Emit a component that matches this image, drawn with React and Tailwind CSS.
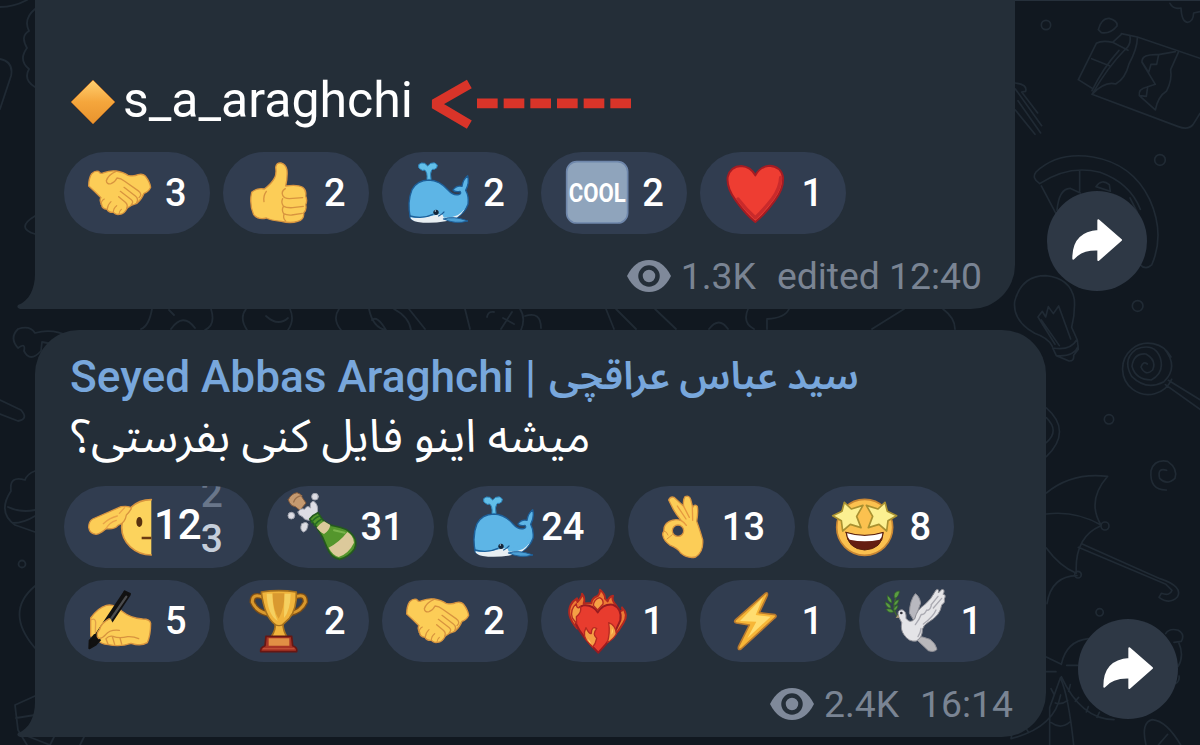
import React from "react";
import clsx from "clsx";

const SKIN = "#fccd57";
const SKIN_LINE = "#d8943f";

// Every emoji is drawn in its own viewBox and fills a 72px box
const Emoji = ({ box, children }) => (
  <svg
    viewBox={box}
    className="ml-5 h-[72px] w-[72px] shrink-0 overflow-visible"
    fill="none"
    strokeLinecap="round"
    strokeLinejoin="round"
  >
    {children}
  </svg>
);

const Handshake = () => (
  <Emoji box="252 321 216 216">
    <g stroke={SKIN_LINE} strokeWidth="4">
      <path fill={SKIN} d="M266 408 Q266 385 275 371 Q285 361 296 364 Q301 374 312 368 Q330 361 348 363 Q370 366 384 376 Q402 380 414 374 Q428 370 436 378 Q450 396 452 412 Q446 426 432 430 Q426 447 411 460 Q394 464 382 474 Q372 494 358 493 Q347 495 340 487 Q326 488 321 478 Q305 477 305 463 Q297 450 303 443 Q284 424 266 408Z" />
      <path d="M348 364 Q325 374 319 392 Q320 404 333 401 Q345 397 351 384 Q363 385 373 393 L414 422 Q429 433 417 443 M372 412 L406 438 Q417 447 410 458 M361 424 L394 449 Q402 456 394 464 M356 440 L376 457 Q385 465 380 475" />
      <path d="M303 463 Q305 450 313 447 M322 477 Q323 464 333 455 M340 487 Q340 474 350 467 M357 493 Q357 484 364 478" strokeWidth="3.5" />
    </g>
  </Emoji>
);

const ThumbsUp = () => (
  <Emoji box="729 321 216 216">
    <g stroke={SKIN_LINE} strokeWidth="4">
      <path fill={SKIN} d="M827 352 Q829 337 843 339 Q857 342 861 360 Q863 382 857 408 Q893 403 908 412 Q920 421 917 438 Q923 452 917 464 Q921 480 911 489 Q913 509 893 514 Q872 521 844 514 Q810 511 799 504 Q774 510 761 494 Q747 462 755 427 Q770 413 793 417 Q815 401 824 383 Q830 370 827 352Z" />
      <path d="M799 424 Q789 438 792 455 M856 416 Q843 424 848 436 Q852 446 868 446 L908 443 M848 446 Q842 457 850 468 Q858 474 878 473 L910 469 M850 470 Q844 480 851 491 Q860 496 875 495 L907 490 M852 493 Q848 505 857 513" />
    </g>
  </Emoji>
);

const Whale = () => (
  <Emoji box="96 291 216 216">
    <path fill="#5db5e6" stroke="#1d5f99" strokeWidth="4" d="M121 474 Q111 425 126 389 Q141 361 176 360 Q209 361 234 390 Q251 409 268 403 Q275 400 270 394 Q254 397 249 390 Q259 375 276 379 Q279 358 293 347 Q299 369 287 391 Q297 408 294 433 Q285 459 258 474 Q205 487 148 483 Q126 482 121 474Z" />
    <path fill="#e8eef2" d="M121 472 Q150 477 183 468 L215 461 L224 473 L284 448 Q264 482 226 484 Q180 492 143 486 Q122 482 121 472Z" />
    <path fill="#5db5e6" d="M220 460 Q266 463 289 424 Q291 448 264 465 Q242 475 220 472Z" />
    <path stroke="#1d5f99" strokeWidth="4" d="M120 468 Q159 478 189 463 M206 468 Q218 462 222 456" />
    <path fill="#4ca0d5" stroke="#1d5f99" strokeWidth="3" d="M221 477 Q248 466 294 483 Q255 494 221 477Z" />
    <circle cx="198" cy="457" r="8" fill="#142539" />
    <circle cx="196" cy="453" r="2" fill="#d6edfa" />
    <path fill="#62bfe8" stroke="#2d85bd" strokeWidth="3" d="M171 357 Q173 337 164 330 Q156 333 152 328 Q144 326 146 314 Q153 306 164 310 L173 318 L182 310 Q195 305 202 315 Q202 326 193 328 Q187 327 185 330 Q179 340 183 357Z" />
  </Emoji>
);

const Cool = () => (
  <Emoji box="573 291 216 216">
    <rect x="590" y="305" width="183" height="184" rx="30" fill="#8fa4bc" stroke="#6f87ab" strokeWidth="5" />
    <text
      x="596"
      y="425"
      textLength="171"
      lengthAdjust="spacingAndGlyphs"
      fill="#fff"
      className="font-[Roboto,sans-serif] text-[76px] font-bold"
    >
      COOL
    </text>
  </Emoji>
);

const Heart = () => (
  <Emoji box="1053 291 216 216">
    <path fill="#ee3d32" stroke="#a41c23" strokeWidth="6" d="M1159 486 Q1130 463 1100 421 Q1072 383 1076 351 Q1084 319 1117 318 Q1145 320 1159 346 Q1173 320 1201 317 Q1236 319 1242 351 Q1245 385 1218 421 Q1187 464 1159 486Z" />
    <path stroke="#c92a2b" strokeWidth="10" d="M1235 352 Q1234 384 1210 416 Q1180 454 1159 473 Q1132 450 1107 417" />
  </Emoji>
);

const Salute = () => (
  <Emoji box="102 48 216 216">
    <path fill="#fcd35d" d="M304 74 A89 83 0 0 0 304 240Z" />
    <path stroke={SKIN_LINE} strokeWidth="5" d="M304 74 A89 83 0 0 0 304 240" />
    <path fill={SKIN} stroke={SKIN_LINE} strokeWidth="4" d="M128 132 Q169 114 213 95 Q240 91 244 101 Q237 113 229 120 Q226 144 204 151 Q194 164 168 161 Q151 176 138 178 Q119 176 116 157 Q116 139 128 132Z" />
    <path stroke="#e9a348" strokeWidth="4" d="M160 146 Q178 129 202 123 M168 161 Q178 142 199 136 M224 98 L208 115" />
    <ellipse cx="268" cy="141" rx="9" ry="15" fill="#57300f" />
    <path stroke="#6b3a12" strokeWidth="8" strokeLinecap="butt" d="M275 189 H304" />
  </Emoji>
);

const Champagne = () => (
  <Emoji box="708 48 216 216">
    <path fill="#c59a70" stroke="#80593c" strokeWidth="3" d="M712 74 Q720 56 738 53 Q752 56 754 68 L765 84 L747 106 L733 95 Q716 92 712 74Z" />
    <path stroke="#9b714d" strokeWidth="4" d="M728 81 Q733 65 752 62" />
    <g fill="#dddde4" stroke="#a2a5b0" strokeWidth="3">
      <path d="M741 111 Q749 98 761 103 Q768 89 779 99 Q775 80 788 79 Q803 88 799 112 L775 136 Q758 134 755 125 Q742 122 741 111Z" />
      <circle cx="792" cy="65" r="10" />
      <circle cx="721" cy="122" r="10" />
      <path d="M752 147 Q766 137 771 148 Q769 169 757 171 Q745 164 752 147Z" />
    </g>
    <path fill="#54962c" stroke="#245a1e" strokeWidth="5" d="M776 132 Q786 119 801 113 L814 133 Q828 150 850 153 Q892 160 905 180 Q921 199 910 223 Q893 247 866 253 Q841 249 829 220 Q817 186 797 157Z" />
    <path fill="#dcc99b" d="M797 158 Q808 145 819 139 L838 150 Q835 167 819 177 Q807 171 797 158Z M833 218 Q865 202 889 171 Q908 182 909 203 Q894 235 863 246 Q844 240 833 218Z" />
    <path stroke="#276c24" strokeWidth="5" d="M782 142 Q791 128 806 123 M790 151 Q800 138 812 132" />
    <path stroke="#79b44b" strokeWidth="6" d="M849 166 L881 173" />
  </Emoji>
);

const OkHand = () => (
  <Emoji box="624 48 216 216">
    <path fill={SKIN} stroke={SKIN_LINE} strokeWidth="4" d="M686 75 Q690 63 702 67 L731 94 Q728 74 735 65 Q748 60 752 73 L758 97 Q765 85 772 94 Q775 112 770 139 Q777 157 788 194 Q791 231 767 246 Q744 252 722 234 Q713 219 691 211 Q671 197 669 183 Q666 174 672 168 Q670 148 688 139 Q706 130 724 137 Q709 119 700 103Z" />
    <path stroke="#e6993f" strokeWidth="4" d="M724 137 Q735 144 739 151 M731 94 L748 127 M757 96 L758 136 M712 93 Q728 117 738 132" />
    <circle cx="714" cy="167" r="17" fill="#313d50" stroke={SKIN_LINE} strokeWidth="4" />
    <path stroke={SKIN_LINE} strokeWidth="3" d="M672 168 Q681 169 684 180 M681 192 L697 179" />
  </Emoji>
);

const StarStruck = () => (
  <Emoji box="414 48 216 216">
    <circle cx="524" cy="157" r="84" fill="#fbc14f" stroke="#c88633" strokeWidth="5" />
    <g fill="#fcf091" stroke="#a99131" strokeWidth="5">
      <path d="M463 82 L484 102 L519 91 L500 124 L513 158 L481 148 L458 168 L454 137 L428 122 L456 109Z" />
      <path d="M585 82 L564 102 L529 91 L548 124 L535 158 L567 148 L590 168 L594 137 L620 122 L592 109Z" />
    </g>
    <path fill="#641d12" stroke="#57210f" strokeWidth="3" d="M468 172 Q524 190 580 172 Q577 222 524 225 Q473 222 468 172Z" />
    <path fill="#fff" d="M471 175 Q524 191 577 175 Q577 187 569 194 Q524 203 479 194 Q472 188 471 175Z" />
  </Emoji>
);

const Writing = () => (
  <Emoji box="102 330 216 216">
    <path fill={SKIN} stroke={SKIN_LINE} strokeWidth="4" d="M122 429 Q144 398 169 391 Q194 386 215 408 Q242 430 278 432 Q300 432 302 445 Q302 481 292 503 Q272 515 243 505 Q211 516 175 509 Q150 507 142 492 Q126 497 122 482Z" />
    <path stroke="#111" strokeWidth="24" strokeLinecap="butt" d="M232 354 L144 486" />
    <path stroke="#4b4c4e" strokeWidth="7" d="M229 365 L158 468" />
    <path fill="#111" stroke="#111" strokeWidth="6" d="M224 349 L240 357 M134 480 L119 497 L118 520 L136 510 L155 489Z" />
    <path fill={SKIN} d="M157 443 L181 431 L198 459 L186 481 L155 496 Q139 488 141 474Z" />
    <path stroke={SKIN_LINE} strokeWidth="4" d="M178 431 Q154 444 149 463 Q135 479 146 491 Q160 489 167 479 Q179 463 208 466 M168 491 Q177 481 189 484 Q207 491 233 485 Q251 484 266 491 M168 492 L174 507 M187 485 L194 508 M210 489 L215 507" />
    <path stroke="#e0a04a" strokeWidth="4" d="M124 434 Q136 429 137 442 L136 472" />
  </Emoji>
);

const Trophy = () => (
  <Emoji box="579 330 216 216">
    <path stroke="#7c4d16" strokeWidth="17" d="M640 367 Q607 353 607 381 Q619 409 651 416 M733 367 Q766 353 766 381 Q754 409 720 416" />
    <path stroke="#d9982c" strokeWidth="9" d="M640 367 Q607 353 607 381 Q619 409 651 416 M733 367 Q766 353 766 381 Q754 409 720 416" />
    <path fill="#f0b43c" stroke="#a5701d" strokeWidth="5" d="M634 351 Q686 343 739 351 Q741 402 718 430 L699 448 Q699 466 711 486 H663 Q678 464 675 448 Q643 425 634 351Z" />
    <path fill="#f5d060" d="M650 356 H667 Q668 405 683 438 Q652 418 650 356Z M703 356 H722 Q721 406 702 429Z" />
    <path fill="#d99930" d="M668 355 H703 Q704 401 686 431 Q668 405 668 355Z" />
    <path stroke="#a5701d" strokeWidth="4" d="M675 449 Q687 455 699 449" />
    <path fill="#a83425" stroke="#671713" strokeWidth="5" d="M648 484 H725 L728 512 Q743 517 740 530 H632 Q630 518 645 512Z" />
    <path fill="#e18f45" d="M656 490 H718 V512 H656Z" />
    <path stroke="#c04e35" strokeWidth="4" d="M640 521 H732" />
  </Emoji>
);

const FireHeart = () => (
  <Emoji box="363 330 216 216">
    <path fill="#ee7a34" stroke="#b3281f" strokeWidth="6" d="M411 460 Q377 422 392 390 Q399 377 411 370 L412 381 Q427 365 426 356 Q437 370 431 385 L454 385 Q455 369 473 363 Q481 355 480 344 Q496 357 495 371 L503 379 Q506 365 519 362 Q514 376 526 388 L539 408 Q550 410 546 397 Q567 418 550 444 Q537 467 520 485Z" />
    <path fill="#e83c2e" stroke="#981b20" strokeWidth="6" d="M475 533 Q425 485 408 447 Q400 401 430 391 Q459 388 473 412 Q490 386 518 389 Q547 401 541 436 Q523 483 475 533Z" />
    <g fill="#f5a045" stroke="#b62a22" strokeWidth="4">
      <path d="M449 507 Q424 484 438 458 Q448 479 454 475 Q455 451 470 461 Q456 477 470 490 Q467 506 458 516Z" />
      <path d="M502 503 Q511 474 506 443 Q528 451 529 477 Q520 493 502 503Z" />
      <path d="M397 429 Q389 403 409 386 Q410 405 421 395 Q427 410 409 425 L410 446Z" />
      <path d="M460 391 Q462 373 479 368 Q491 373 489 387 L473 405Z" />
    </g>
    <path fill="#ffd467" d="M443 491 Q452 498 454 507 Q445 501 443 491Z M514 479 L516 460 Q523 471 514 479Z" />
  </Emoji>
);

const Bolt = () => (
  <Emoji box="93 330 216 216">
    <path fill="#f7b637" stroke="#b8792e" strokeWidth="5" d="M229 355 Q237 350 235 361 L211 413 L258 419 Q265 423 257 429 L156 522 Q145 527 149 514 L181 450 L142 444 Q133 441 140 434Z" />
    <path fill="#ffdd70" d="M222 367 L200 420 L245 425 L175 490 L202 440 L153 438Z" />
  </Emoji>
);

const Dove = () => (
  <Emoji box="567 330 216 216">
    <path stroke="#3f682f" strokeWidth="4" d="M622 424 Q602 399 624 352" />
    <path fill="#5b9d42" stroke="#315f2b" strokeWidth="2" d="M622 349 Q610 353 613 369 Q624 371 629 349Z M592 361 Q590 380 605 384 Q608 373 592 361Z M586 381 Q587 398 603 400 Q603 387 586 381Z M588 403 Q596 416 611 411 Q605 398 588 403Z M627 374 Q613 376 611 390 Q622 393 627 374Z M624 391 Q611 395 611 406 Q622 407 624 391Z" />
    <g stroke="#8f8f96" strokeWidth="3">
      <path fill="#b8b8bf" d="M658 413 Q660 374 676 356 Q688 363 692 384 L673 438Z" />
      <path fill="#b9b8bb" d="M678 484 Q699 484 720 493 Q737 505 741 523 Q733 533 715 527 L680 494Z" />
      <path fill="#e4e4e7" d="M626 425 Q619 405 636 404 Q650 408 648 430 Q660 447 674 432 Q681 403 703 390 Q723 374 738 345 Q748 339 745 354 L756 343 Q767 344 759 358 Q770 359 763 372 Q768 381 755 390 Q751 421 716 441 Q701 449 697 463 Q698 487 679 498 Q657 502 642 479 Q631 465 635 444Z" />
    </g>
    <path stroke="#aaaab2" strokeWidth="4" d="M676 449 Q689 432 694 418 Q703 421 710 405 Q718 409 724 392 M744 364 L723 390 M755 370 L730 399 M700 447 Q730 425 738 405 M684 485 Q692 473 693 460" />
    <circle cx="634" cy="414" r="4" fill="#303039" />
    <path fill="#a99777" d="M625 418 L617 429 L628 428Z" />
  </Emoji>
);

const Arrow = () => (
  <svg viewBox="555 180 606 150" className="ml-[18px] mt-[7px] h-[50px] w-[202px] overflow-visible" fill="none" stroke="#d93429">
    <path strokeWidth="29" strokeLinejoin="bevel" d="M670 192 L565 252 L670 314" />
    <path strokeWidth="29" strokeDasharray="62 18" d="M693 250 H1157" />
  </svg>
);

const Eye = () => (
  <svg viewBox="0 0 44 32" className="h-8 w-11">
    <path fill="#7f899a" d="M0 16 Q8 0 22 0 Q36 0 44 16 Q36 32 22 32 Q8 32 0 16Z" />
    <circle cx="22" cy="16" r="8.5" fill="#7f899a" stroke="#242e38" strokeWidth="4.5" />
  </svg>
);

const Tail = () => (
  <svg viewBox="0 0 20 40" className="absolute -left-[18px] bottom-0 h-10 w-5">
    <path fill="#242e38" d="M18 0 V5 C18 20 12 32 1 36 Q-1 39 3 40 H20 V0Z" />
  </svg>
);

const ShareButton = () => (
  <button className="mb-[18px] ml-8 h-[100px] w-[100px] shrink-0 rounded-full bg-[#2e3845]">
    <svg viewBox="140 573 300 300" className="h-full w-full">
      <path fill="#fff" stroke="#fff" strokeWidth="6" strokeLinejoin="round" d="M219 776 Q218 698 294 693 V661 L362 720 L294 780 V749 Q243 747 219 776Z" />
    </svg>
  </button>
);

const Reaction = ({ icon: Icon, count, rolling }) => {
  const wide = String(count).length > 1;
  return (
    <div
      className={clsx(
        "flex h-[82px] items-center overflow-hidden rounded-full bg-[#313d50] text-[38px] font-medium leading-none text-white",
        rolling ? "w-[189.5px]" : wide ? "w-[167.5px]" : "w-[146px]"
      )}
    >
      <Icon />
      {rolling ? (
        <div className="-ml-0.5 flex items-center text-[42px]">
          <span className="-mt-1">{count}</span>
          {/* last digit is caught halfway through its roll */}
          <span className="-ml-px mt-[-21px] flex flex-col text-[39px] leading-[45px]">
            <span className="text-[#69768a]">{rolling[0]}</span>
            <span className="text-[#c5ceda]">{rolling[1]}</span>
          </span>
        </div>
      ) : (
        <span className={wide ? "ml-0.5" : "ml-[9px]"}>{count}</span>
      )}
    </div>
  );
};

const ReactionRow = ({ items }) => (
  <div className="flex gap-[13.1px]">
    {items.map((item, i) => (
      <Reaction key={i} {...item} />
    ))}
  </div>
);

// Line doodles of the chat wallpaper
const Wallpaper = () => (
  <svg viewBox="0 0 1200 745" className="absolute inset-0 h-full w-full" fill="none" stroke="#202a34" strokeLinecap="round" strokeLinejoin="round">
    <path stroke="#26303b" strokeWidth="2" d="M1015 0 H1200" />
    <g transform="translate(1000 0) scale(.3333)" strokeWidth="5">
      <circle cx="138" cy="75" r="14" />
      <circle cx="480" cy="480" r="16" />
      <circle cx="413" cy="918" r="16" />
      <path d="M510 10 Q520 29 543 24 Q545 65 562 67 Q580 66 581 39 L600 35 M295 89 Q304 54 327 55 Q354 62 351 78 Q331 103 304 98Z" />
      <path d="M364 101 L412 111 L600 175 M235 239 L289 130 Q306 120 338 127 L364 103 M235 239 L275 264 M276 283 Q325 199 374 150 Q394 135 390 109 M412 111 Q413 144 387 192 Q376 236 347 252 Q314 243 276 283 L535 380 Q565 391 579 374 L600 340 M275 176 L328 197 M338 127 L384 151 M276 272 Q309 204 357 151" />
      <path d="M526 155 L476 164 Q424 161 426 187 L466 253 L441 261 Q414 267 418 287 L466 330 Q474 289 500 273 Q517 240 512 209 L536 155 M427 187 L446 217 L453 193 L470 193 L476 164 M420 287 L439 289 L443 261" />
      <path d="M46 249 Q83 253 77 274 L65 276 L113 339 M46 267 L125 377 M54 302 L122 399 M46 330 L105 403" />
      <path d="M119 551 Q94 535 108 516 Q173 454 279 471 Q397 491 449 598 Q496 702 455 795 Q437 812 419 793 Q437 742 435 690 M119 551 Q207 493 300 517 Q390 549 421 628 M124 558 L170 645 M239 512 V574 M171 631 Q177 566 210 565 L241 579 M288 560 Q305 535 328 554 L331 574Z M390 594 L412 637" />
      <path d="M157 1039 Q145 1014 104 1000 Q38 963 44 905 Q64 827 137 827 Q211 834 223 898 Q226 937 215 982 L232 1020 M158 1044 L169 1067 L207 1083 Q223 1084 221 1066 L235 1048 L232 1020 M158 1044 Q211 1053 230 1020 M169 1067 Q222 1071 235 1038 M165 1033 L114 951 L127 934 L137 951 L145 920 L160 941 L176 918 L212 1017 M124 960 L178 1037" />
    </g>
    <g transform="translate(1000 372) scale(.3333)" strokeWidth="5">
      <path d="M515 22 A77 77 0 1 1 513 -45 M492 -71 Q538 -15 492 29 Q439 57 395 13 Q366 -38 408 -68 Q463 -90 481 -42 Q494 2 454 24 Q407 24 396 -17 Q401 -57 438 -54 Q471 -35 458 -6 Q436 14 423 -15 Q430 -34 442 -24 M505 25 L600 83 M496 38 L600 112" />
      <circle cx="327" cy="142" r="14" />
      <circle cx="299" cy="721" r="11" />
      <path d="M139 108 Q218 177 139 254 M139 137 Q180 177 139 212" />
      <path d="M499 354 Q448 355 453 296 Q463 261 503 268 Q534 289 525 319 Q500 342 479 319 Q471 286 500 295" />
      <path d="M139 363 Q215 300 323 313 Q259 386 303 459 Q226 415 139 426 M301 462 Q223 496 229 604 Q178 582 139 528 M231 611 Q154 612 141 695 M245 515 L480 620 Q551 644 532 675 Q509 699 477 676 L484 664 Q511 673 516 655 L498 637 L235 526" />
      <circle cx="315" cy="462" r="12" />
      <circle cx="234" cy="608" r="10" />
      <path d="M139 855 L184 877 Q199 807 265 800 M139 899 H168 M181 918 L149 1007 V1119 M181 918 Q205 968 221 1119 M184 914 Q243 1042 342 1043 M166 993 Q184 1000 203 985 M154 1052 Q182 1074 210 1050 M182 969 Q163 1068 33 1100 L36 1084 Q77 1067 130 1000 M200 880 H233 M153 950 L163 969 M211 938 L206 958 M236 976 L226 988 M265 1004 L259 1020 M298 1021 L291 1036 M77 1067 L86 1082" />
      <path d="M497 785 Q508 767 535 775 Q556 787 544 808 L522 811 M536 811 Q554 851 534 884 M527 935 Q540 926 537 912 M438 1119 Q422 1051 457 1043 Q500 1047 542 1119 M475 1119 L503 1087" />
    </g>
    <g strokeWidth="1.8">
      <path d="M0 7 Q14 7 27 0 M0 59 Q14 62 11 76 L0 109 M35 9 Q23 19 29 31 Q20 36 27 48 Q18 60 29 69 Q23 80 35 87 M35 216 Q15 228 35 234" />
      <path d="M18 348 Q9 338 18 329 Q30 325 35 333 Q53 328 70 337 M18 348 Q26 342 24 351 Q30 363 41 351 L42 342 L58 345 M0 400 L21 410 Q29 419 18 421 L0 414" />
      <path d="M35 471 Q27 474 25 480 Q9 475 11 491 Q-3 512 15 525 L35 532 M8 507 Q21 513 35 510 M13 523 Q24 523 35 516 M35 586 Q4 612 35 648 M35 696 L15 705 L18 730 L27 745 M16 718 L35 715 M22 734 L50 745 L54 737 M80 745 L84 737" />
      <circle cx="22" cy="564" r="3.5" />
      <path d="M152 309 Q149 326 141 329 M211 309 Q216 325 205 330 M171 329 Q183 312 195 328 M169 310 L174 315 M246 309 Q239 318 247 330 M290 309 Q295 320 288 330 M266 316 Q278 327 288 318 M339 309 Q332 319 341 330 M369 309 Q373 328 386 330 Q377 315 372 320 M394 309 Q409 317 411 330 M409 309 L425 329 M465 309 L470 329 M487 317 Q488 311 494 312 M501 329 L512 312 M503 318 L514 324 M520 309 Q526 318 521 330 M525 316 Q541 311 541 328 M606 309 L614 329 M616 309 L636 329 M655 309 L676 329 M709 329 Q719 316 728 329 M748 309 Q742 323 754 329 M767 329 V319 Q785 318 789 309 M872 329 L904 309 M943 309 Q955 318 955 329" />
    </g>
  </svg>
);

const App = () => {
  return (
    <div className="relative h-[745px] w-[1200px] overflow-hidden bg-[#111820] font-[Roboto,'Noto_Sans_Arabic','DejaVu_Sans',sans-serif]">
      <Wallpaper />

      <div className="relative flex items-end pl-[35px]">
        <div className="relative h-[309px] w-[980px] shrink-0 rounded-br-[44px] bg-[#242e38] pl-[29px] pt-[70px]">
          <Tail />
          <div className="flex h-[62px] items-center pl-1.5 text-white">
            <svg viewBox="0 0 46 46" className="mt-0.5 h-[46px] w-[46px]">
              <defs>
                <linearGradient id="diamond" x1="0" y1="0" x2="0" y2="1">
                  <stop offset="0" stopColor="#ffd071" />
                  <stop offset="0.5" stopColor="#f5a63c" />
                  <stop offset="1" stopColor="#e8932d" />
                </linearGradient>
              </defs>
              <path fill="url(#diamond)" stroke="#a76627" strokeWidth="1" strokeLinejoin="round" d="M23 1 L45 23 L23 45 L1 23Z" />
            </svg>
            <span className="-mt-0.5 ml-[7px] text-[50px] leading-[60px]">s_a_araghchi</span>
            <Arrow />
          </div>
          <div className="mt-5">
            <ReactionRow
              items={[
                { icon: Handshake, count: 3 },
                { icon: ThumbsUp, count: 2 },
                { icon: Whale, count: 2 },
                { icon: Cool, count: 2 },
                { icon: Heart, count: 1 },
              ]}
            />
          </div>
          <div className="mt-[17px] flex items-center justify-end pr-[33px] text-[37.3px] leading-[50px] text-[#7a8493]">
            <Eye />
            <span className="ml-2.5">1.3K</span>
            <span className="ml-[21px]">edited 12:40</span>
          </div>
        </div>
        <ShareButton />
      </div>

      <div className="relative mt-[21px] flex items-end pl-[35px]">
        <div className="relative h-[407px] w-[1011px] shrink-0 rounded-t-[44px] rounded-br-[44px] bg-[#242e38] pl-[29px] pt-[19px]">
          <Tail />
          <div className="flex h-[56px] items-center whitespace-nowrap pl-1.5 text-[#78a7dc]">
            <span className="text-[44.2px] font-medium leading-[56px]">Seyed Abbas Araghchi |</span>
            <span dir="rtl" className="ml-[13px] mt-[-3px] text-[38.9px] font-semibold leading-[56px] tracking-[-0.2px]">سید عباس عراقچی</span>
          </div>
          <div className="flex h-[62px] items-center pl-[7px]">
            <span dir="rtl" className="whitespace-nowrap text-[46px] leading-[62px] text-white">میشه اینو فایل کنی بفرستی؟</span>
          </div>
          <div className="mt-[19px] flex flex-col gap-3">
            <ReactionRow
              items={[
                { icon: Salute, count: 12, rolling: [2, 3] },
                { icon: Champagne, count: 31 },
                { icon: Whale, count: 24 },
                { icon: OkHand, count: 13 },
                { icon: StarStruck, count: 8 },
              ]}
            />
            <ReactionRow
              items={[
                { icon: Writing, count: 5 },
                { icon: Trophy, count: 2 },
                { icon: Handshake, count: 2 },
                { icon: FireHeart, count: 1 },
                { icon: Bolt, count: 1 },
                { icon: Dove, count: 1 },
              ]}
            />
          </div>
          <div className="mt-[17px] flex items-center justify-end pr-[33px] text-[37.3px] leading-[50px] text-[#7a8493]">
            <Eye />
            <span className="ml-2.5">2.4K</span>
            <span className="ml-[21px]">16:14</span>
          </div>
        </div>
        <ShareButton />
      </div>
    </div>
  );
};

export default App;
